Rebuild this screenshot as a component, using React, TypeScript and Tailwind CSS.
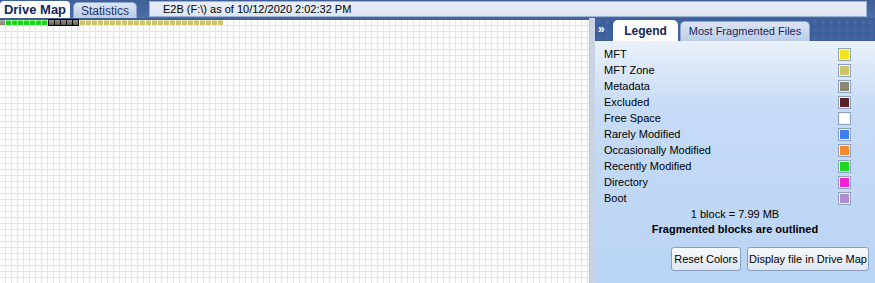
const legend = [
  { label: "MFT", color: "#f2e41e" },
  { label: "MFT Zone", color: "#cdc56c" },
  { label: "Metadata", color: "#8c8870" },
  { label: "Excluded", color: "#5a2222" },
  { label: "Free Space", color: "#ffffff" },
  { label: "Rarely Modified", color: "#3c80f2" },
  { label: "Occasionally Modified", color: "#f28a32" },
  { label: "Recently Modified", color: "#22d422" },
  { label: "Directory", color: "#f022d8" },
  { label: "Boot", color: "#b08cd2" },
];

const Block = ({ cls }: { cls: string }) => (
  <div className={`h-[5px] w-[5px] shrink-0 ${cls}`} />
);

const DriveMap = () => {
  const green = Array.from({ length: 7 });
  const frag = Array.from({ length: 5 });
  const zone = Array.from({ length: 24 });
  return (
    <div className="relative flex-1 bg-white bg-[linear-gradient(to_right,transparent_5px,#dae6f8_5px),linear-gradient(to_bottom,transparent_5px,#dae6f8_5px)] bg-[size:6px_6px]">
      <div className="flex gap-px">
        <Block cls="bg-[linear-gradient(to_bottom,#aaa89a,#87847a)]" />
        {green.map((_, i) => (
          <Block key={i} cls="bg-[linear-gradient(to_bottom,#7cf07c_0,#7cf07c_1px,#16d616_1px)]" />
        ))}
        <div className="-mt-px flex h-[7px] border border-black bg-black gap-px">
          {frag.map((_, i) => (
            <Block key={i} cls="bg-[linear-gradient(to_bottom,#9a9886,#5e5c50)]" />
          ))}
        </div>
        {zone.map((_, i) => (
          <Block key={i} cls="bg-[linear-gradient(to_bottom,#e2dc9a_0,#e2dc9a_1px,#cbc36e_1px)]" />
        ))}
      </div>
    </div>
  );
};

export default function App() {
  return (
    <div className="flex h-[283px] w-[875px] flex-col overflow-hidden bg-[#4668a2] font-['Liberation_Sans',Arial,sans-serif] text-[11px] text-black">
      {/* top bar */}
      <div className="flex h-[18px] shrink-0 items-end bg-[linear-gradient(to_bottom,#3f5f98,#4a6ea8)]">
        <div className="flex h-[17px] w-[70px] items-center justify-center rounded-t-[4px] bg-white text-[13px] font-bold text-[#16265a]">
          Drive Map
        </div>
        <div className="ml-[3px] flex h-[16px] w-[64px] items-center justify-center rounded-t-[5px] border border-b-0 border-[#8ea6cc] bg-[linear-gradient(to_bottom,#dce6f5,#b8cbe8)] text-[12px] text-[#1c356a]">
          Statistics
        </div>
        <div className="mb-px ml-[12px] flex h-[16px] w-[718px] items-center border border-[#9cb2d4] bg-[linear-gradient(to_bottom,#e8eef8,#dce6f3)] pl-[13px] text-[11px] text-black">
          E2B (F:\) as of 10/12/2020 2:02:32 PM
        </div>
      </div>

      <div className="flex flex-1">
        {/* left map */}
        <div className="flex w-[589px] flex-col">
          <div className="h-[2px] bg-[#3f5f96]" />
          <DriveMap />
        </div>
        {/* divider */}
        <div className="w-[6px] border-l border-[#b4c2d8] bg-[#c8d3e3]" />

        {/* right panel */}
        <div className="flex flex-1 flex-col">
          <div className="flex h-[23px] shrink-0 items-end bg-[#3c5e9b] bg-[radial-gradient(circle,#44679f_2px,transparent_3px)] bg-[size:8px_8px] pl-[3px]">
            <div className="mb-[6px] w-[15px] text-[12px] font-bold leading-none text-white">»</div>
            <div className="flex h-[21px] w-[65px] items-center justify-center rounded-t-[5px] bg-white text-[12px] font-bold text-[#16265a]">
              Legend
            </div>
            <div className="ml-[2px] flex h-[20px] w-[130px] items-center justify-center rounded-t-[5px] border border-b-0 border-[#8ea6cc] bg-[linear-gradient(to_bottom,#dbe5f4,#bccde8)] text-[11px] text-[#16265a]">
              Most Fragmented Files
            </div>
          </div>
          <div className="flex flex-1 flex-col bg-[linear-gradient(to_bottom,#eaf1fb,#c6dbf6_28%,#b9d4f5)] pl-[9px] pr-[9px] pt-[5px]">
            {legend.map((l) => (
              <div key={l.label} className="flex h-[16px] items-center justify-between">
                <span>{l.label}</span>
                <span className="mr-[15px] flex h-[13px] w-[13px] items-center justify-center border border-[#8ea2c2] bg-[#eef2f8]">
                  <span className="h-[9px] w-[9px]" style={{ backgroundColor: l.color }} />
                </span>
              </div>
            ))}
            <div className="mt-[1px] text-center leading-[15px]">1 block = 7.99 MB</div>
            <div className="text-center font-bold leading-[15px]">Fragmented blocks are outlined</div>
            <div className="-mr-[3px] mt-[10px] flex justify-end gap-[6px]">
              <button className="h-[24px] w-[70px] rounded-[3px] border border-[#8a9fbf] bg-[linear-gradient(to_bottom,#f7f9fc,#dfe8f4)] text-[11px]">
                Reset Colors
              </button>
              <button className="h-[24px] w-[122px] rounded-[3px] border border-[#8a9fbf] bg-[linear-gradient(to_bottom,#f7f9fc,#dfe8f4)] text-[11px]">
                Display file in Drive Map
              </button>
            </div>
          </div>
        </div>
      </div>
    </div>
  );
}
